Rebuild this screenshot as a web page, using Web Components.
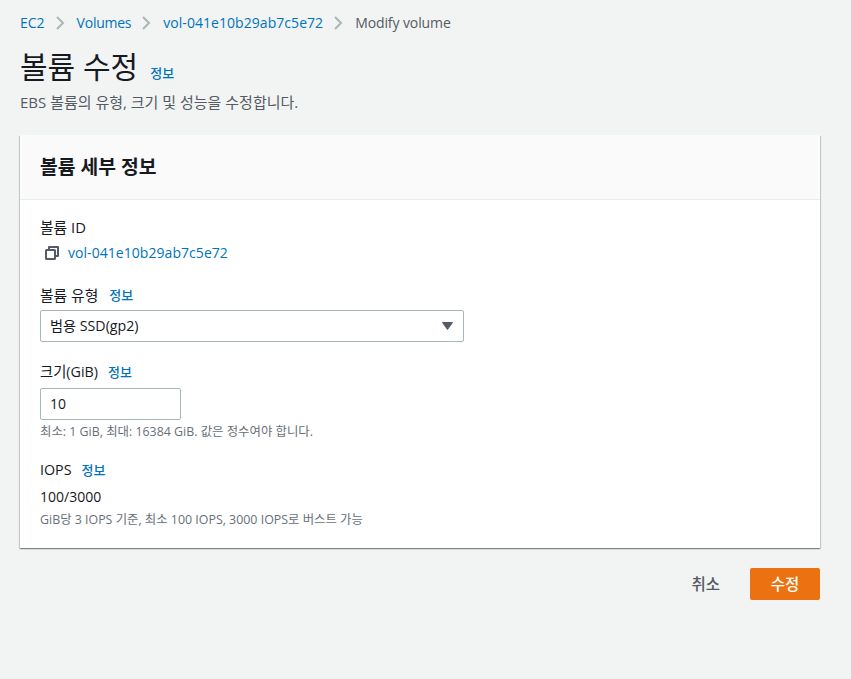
<!DOCTYPE html>
<html lang="ko">
<head>
<meta charset="utf-8">
<title>Modify volume</title>
<style>
  html, body { margin: 0; height: 100%; }
  body {
    background: #f2f3f3;
    color: #16191f;
    font: 14px/20px "Open Sans", "Noto Sans CJK KR", sans-serif;
  }
</style>
</head>
<body>
<template id="crumbs-tpl">
  <style>
    :host { display: flex; align-items: center; height: 20px; color: #545b64; }
    ::slotted(a) { color: #0073bb; text-decoration: none; }
    ::slotted(svg) { margin: 0 12px 0 11px; flex: none; }
  </style>
  <slot></slot>
</template>

<template id="info-tpl">
  <style>
    :host { display: inline-block; margin-left: 10px; color: #0073bb; font-size: 13px; font-weight: 500; line-height: 16px; }
  </style>
  <slot>정보</slot>
</template>

<template id="card-tpl">
  <style>
    :host {
      display: block;
      background: #fff;
      box-shadow: 0 1px 1px 0 rgba(0, 28, 36, .3), 1px 1px 1px 0 rgba(0, 28, 36, .15), -1px 1px 1px 0 rgba(0, 28, 36, .15);
    }
    header {
      height: 65px;
      box-sizing: border-box;
      display: flex;
      align-items: center;
      padding: 0 20px;
      background: #fafafa;
      border-bottom: 1px solid #eaeded;
      font-size: 19.3px;
      font-weight: 700;
    }
    .body { display: flex; flex-direction: column; padding: 17px 20px 20px; }
  </style>
  <header><slot name="title"></slot></header>
  <div class="body"><slot></slot></div>
</template>

<template id="field-tpl">
  <style>
    :host { display: block; margin-bottom: var(--gap, 22px); }
    :host(:last-child) { margin-bottom: 0; }
    .label { display: flex; align-items: center; height: 20px; font-size: var(--label-size, 14.8px); margin-bottom: var(--label-gap, 4px); }
    .hint { color: #687078; font-size: 12.4px; line-height: 16px; margin-top: var(--hint-gap, 4px); }
  </style>
  <div class="label"><slot name="label"></slot></div>
  <slot></slot>
  <div class="hint"><slot name="hint"></slot></div>
</template>

<template id="select-tpl">
  <style>
    :host {
      display: flex;
      align-items: center;
      justify-content: space-between;
      box-sizing: border-box;
      width: 424px;
      height: 32px;
      padding: 0 10px 0 9px;
      font-size: 14.2px;
      background: #fff;
      border: 1px solid #aab7b8;
      border-radius: 2px;
    }
  </style>
  <slot></slot>
  <svg width="11" height="8" viewBox="0 0 11 8"><path d="M.5.5h10L5.5 7.5z" fill="#545b64" stroke="#545b64" stroke-linejoin="round"/></svg>
</template>

<template id="input-tpl">
  <style>
    :host {
      display: flex;
      align-items: center;
      box-sizing: border-box;
      width: 141px;
      height: 32px;
      padding: 0 9px;
      background: #fff;
      border: 1px solid #aab7b8;
      border-radius: 2px;
    }
  </style>
  <slot></slot>
</template>

<template id="page-tpl">
  <style>
    :host { display: block; padding: 13px 31px 0 20px; }
    .title { display: flex; align-items: baseline; margin-top: 16px; height: 36px; }
    h1 { margin: 0; font-size: 30px; line-height: 36px; font-weight: 400; }
    .title ::slotted(aws-info) { margin-left: 12px; }
    .sub { color: #545b64; font-size: 15px; line-height: 20px; margin: 7px 0 23px; }
    .actions { display: flex; justify-content: flex-end; align-items: center; gap: 30px; margin-top: 20px; }
  </style>
  <slot name="crumbs"></slot>
  <div class="title"><h1><slot name="heading"></slot></h1><slot name="info"></slot></div>
  <div class="sub"><slot name="sub"></slot></div>
  <slot></slot>
  <div class="actions"><slot name="actions"></slot></div>
</template>

<template id="btn-tpl">
  <style>
    :host {
      display: flex;
      align-items: center;
      justify-content: center;
      box-sizing: border-box;
      height: 32px;
      font-size: 15.5px;
      font-weight: 500;
      border-radius: 2px;
      color: #545b64;
    }
    :host([primary]) { width: 70px; background: #ec7211; color: #fff; }
  </style>
  <slot></slot>
</template>

<aws-page>
  <aws-crumbs slot="crumbs">
    <a href="#">EC2</a>
    <svg width="9" height="14" viewBox="0 0 9 14"><path d="M1 1l6 6-6 6" fill="none" stroke="#aab7b8" stroke-width="2"/></svg>
    <a href="#" style="letter-spacing:-.25px">Volumes</a>
    <svg width="9" height="14" viewBox="0 0 9 14"><path d="M1 1l6 6-6 6" fill="none" stroke="#aab7b8" stroke-width="2"/></svg>
    <a href="#" style="letter-spacing:.05px">vol-041e10b29ab7c5e72</a>
    <svg width="9" height="14" viewBox="0 0 9 14"><path d="M1 1l6 6-6 6" fill="none" stroke="#aab7b8" stroke-width="2"/></svg>
    <span style="letter-spacing:-.1px">Modify volume</span>
  </aws-crumbs>
  <span slot="heading">볼륨 수정</span>
  <aws-info slot="info"></aws-info>
  <span slot="sub">EBS 볼륨의 유형, 크기 및 성능을 수정합니다.</span>

  <aws-card>
    <span slot="title">볼륨 세부 정보</span>
    <aws-field style="--gap: 18px; --label-gap: 6px">
      <span slot="label">볼륨 ID</span>
      <div style="display:flex;align-items:center;gap:9px;padding-left:5px;height:20px">
        <svg width="14" height="14" viewBox="0 0 14 14" fill="none" stroke="#545b64" stroke-width="2"><rect x="1" y="4" width="9" height="9" rx=".5"/><path d="M4 4V1h9v9h-3" stroke-linejoin="round"/></svg>
        <a href="#" style="color:#0073bb;text-decoration:none;letter-spacing:.05px">vol-041e10b29ab7c5e72</a>
      </div>
    </aws-field>
    <aws-field style="--gap: 16px; --label-gap: 5px">
      <span slot="label">볼륨 유형</span>
      <aws-info slot="label" style="margin-left:11px"></aws-info>
      <aws-select>범용 SSD(gp2)</aws-select>
    </aws-field>
    <aws-field style="--gap: 20px; --label-gap: 6px; --label-size: 14.3px">
      <span slot="label">크기(GiB)</span>
      <aws-info slot="label"></aws-info>
      <aws-input>10</aws-input>
      <span slot="hint">최소: 1 GiB, 최대: 16384 GiB. 값은 정수여야 합니다.</span>
    </aws-field>
    <aws-field style="--label-gap: 7px; --hint-gap: 5px; --label-size: 14.3px">
      <span slot="label">IOPS</span>
      <aws-info slot="label"></aws-info>
      <div>100/3000</div>
      <span slot="hint">GiB당 3 IOPS 기준, 최소 100 IOPS, 3000 IOPS로 버스트 가능</span>
    </aws-field>
  </aws-card>

  <aws-btn slot="actions">취소</aws-btn>
  <aws-btn slot="actions" primary>수정</aws-btn>
</aws-page>

<script>
  // every element here is just a template stamped into an open shadow root
  const elements = {
    'aws-page': 'page-tpl',
    'aws-crumbs': 'crumbs-tpl',
    'aws-info': 'info-tpl',
    'aws-card': 'card-tpl',
    'aws-field': 'field-tpl',
    'aws-select': 'select-tpl',
    'aws-input': 'input-tpl',
    'aws-btn': 'btn-tpl'
  };

  for (const [name, tpl] of Object.entries(elements)) {
    customElements.define(name, class extends HTMLElement {
      constructor() {
        super();
        this.attachShadow({ mode: 'open' });
        this.shadowRoot.appendChild(document.getElementById(tpl).content.cloneNode(true));
      }
    });
  }
</script>
</body>
</html>
